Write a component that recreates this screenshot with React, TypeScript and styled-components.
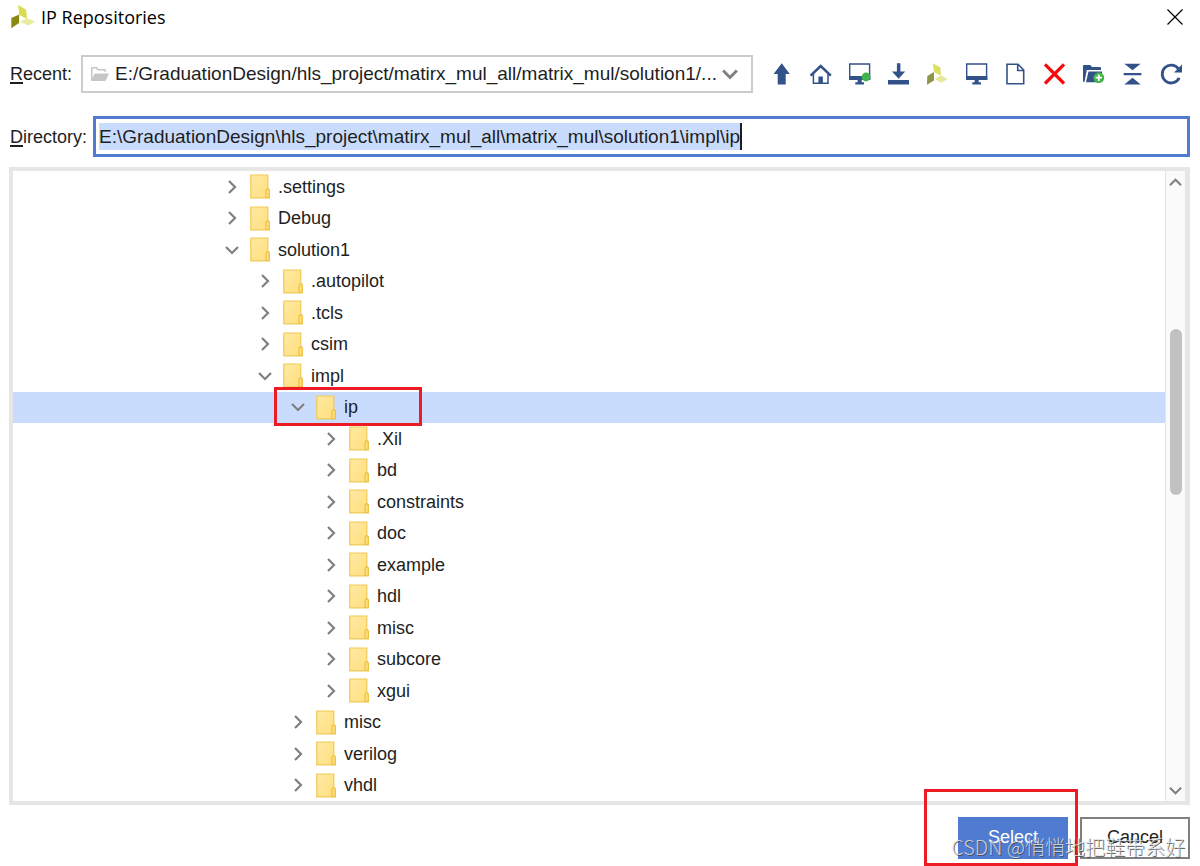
import React, { useState } from "react";
import styled, { createGlobalStyle } from "styled-components";

const color = {
  ink: "#1e1e1e",
  navy: "#34528a",
  accent: "#4f7cd1",
  highlight: "#cadcfd",
  line: "#e6e6e6",
  mark: "#ed1c24",
};

const GlobalStyle = createGlobalStyle`
  * { box-sizing: border-box; }
  body { margin: 0; background: #fff; }
  button, input, select { font: inherit; color: inherit; margin: 0; }
`;

const Dialog = styled.main`
  display: flex;
  flex-direction: column;
  min-height: 100vh;
  padding: 0 10px 7px;
  overflow: hidden;
  font-family: "Liberation Sans", Arial, sans-serif;
  font-size: 18px;
  line-height: 24px;
  color: ${color.ink};
`;

const TitleBar = styled.header`
  display: flex;
  align-items: center;
  gap: 5px;
  height: 34px;
`;

const Title = styled.h1`
  flex: 1;
  margin: 0;
  font: 400 18px/24px "Open Sans", "Noto Sans", sans-serif;
  color: #000;
`;

const PlainButton = styled.button`
  display: flex;
  align-items: center;
  justify-content: center;
  padding: 0;
  border: 0;
  background: none;
  cursor: pointer;
`;

const CloseButton = styled(PlainButton)`
  width: 30px;
  height: 30px;
`;

const RecentRow = styled.div`
  display: flex;
  align-items: center;
  margin-top: 21px;
`;

const FieldLabel = styled.label<{ $width: number }>`
  flex: none;
  width: ${(p) => p.$width}px;
  u { text-underline-offset: 2px; text-decoration-thickness: 2px; }
`;

const Combo = styled.div`
  display: grid;
  grid-template-columns: 33px 1fr 42px;
  align-items: center;
  flex: 1;
  min-width: 0;
  height: 38px;
  border: 2px solid #cccccc;
  & > svg { grid-row: 1; justify-self: center; pointer-events: none; }
  & > svg:first-of-type { grid-column: 1; }
  & > svg:last-of-type { grid-column: 3; }
`;

const RecentSelect = styled.select`
  grid-row: 1;
  grid-column: 1 / -1;
  width: 100%;
  height: 34px;
  padding: 0 28px 0 32px;
  border: 0;
  outline: 0;
  appearance: none;
  background: none;
  font-size: 19px;
  text-overflow: ellipsis;
`;

const Toolbar = styled.div`
  display: flex;
  margin: 0 -1px 0 9px;
`;

const ToolButton = styled(PlainButton)`
  width: 39px;
  height: 38px;
`;

const DirectoryRow = styled.div`
  display: flex;
  align-items: center;
  margin-top: 23px;
`;

const DirectoryBox = styled.div`
  display: flex;
  align-items: center;
  flex: 1;
  min-width: 0;
  height: 41px;
  padding: 0 3px;
  border: 3px solid ${color.accent};
`;

const DirectoryInput = styled.input`
  field-sizing: content;
  max-width: 100%;
  height: 27px;
  padding: 0;
  border: 0;
  border-right: 2px solid ${color.ink};
  outline: 0;
  background: ${color.highlight};
  font-size: 19px;
`;

const Panel = styled.section`
  display: flex;
  flex: 1;
  margin: 10px 0 0 -1px;
  border: 4px solid ${color.line};
  border-right-width: 5px;
`;

const Tree = styled.ul`
  display: flex;
  flex-direction: column;
  flex: 1;
  margin: 0;
  padding: 0;
  list-style: none;
`;

const TreeRow = styled.li<{ $depth: number; $selected: boolean }>`
  position: relative;
  display: flex;
  flex: 1;
  align-items: center;
  min-height: 28px;
  padding-left: ${(p) => 212 + p.$depth * 33}px;
  background: ${(p) => (p.$selected ? color.highlight : "transparent")};
`;

const Toggle = styled(PlainButton)`
  width: 14px;
  height: 24px;
  margin-right: 11px;
`;

const FolderName = styled.span`
  margin-left: 8px;
`;

const Mark = styled.span`
  position: absolute;
  border: 3px solid ${color.mark};
  pointer-events: none;
`;

const RowMark = styled(Mark)`
  inset: -5px auto -3px 261px;
  width: 148px;
`;

const ButtonMark = styled(Mark)`
  inset: -28px -10px -7px -34px;
`;

const ScrollBar = styled.div`
  display: flex;
  flex-direction: column;
  align-items: center;
  width: 20px;
  border-left: 1px solid ${color.line};
  background: #fafafa;
`;

const ScrollArrow = styled(PlainButton)`
  width: 19px;
  height: 22px;
`;

const TrackSpace = styled.div<{ $share: number }>`
  flex: ${(p) => p.$share};
`;

const Thumb = styled.div`
  flex: 166;
  width: 12px;
  border-radius: 6px;
  background: #c1c1c1;
`;

const Footer = styled.footer`
  position: relative;
  display: flex;
  justify-content: flex-end;
  gap: 12px;
  margin-top: 12px;
`;

const ButtonSlot = styled.div`
  position: relative;
`;

const ActionButton = styled.button<{ $primary?: boolean }>`
  display: block;
  width: 110px;
  height: 42px;
  padding: 0 0 2px;
  border: 2px solid ${(p) => (p.$primary ? color.accent : "#808080")};
  background: ${(p) => (p.$primary ? color.accent : "#fff")};
  color: ${(p) => (p.$primary ? "#fff" : color.ink)};
`;

const Watermark = styled.span`
  position: absolute;
  right: 5px;
  bottom: 0;
  font: 20px/24px "Noto Sans CJK SC", sans-serif;
  font-weight: 300;
  white-space: nowrap;
  color: rgba(225, 225, 225, 0.85);
  text-shadow: 1px 1px 0 rgba(70, 70, 70, 0.8);
  pointer-events: none;
`;

function Chevron({ dir, size = 14, weight = 2.2 }: { dir: "right" | "down" | "up"; size?: number; weight?: number }) {
  const d = { right: "M4 1L10 7L4 13", down: "M1 4L7 10L13 4", up: "M1 10L7 4L13 10" }[dir];
  return (
    <svg width={size} height={size} viewBox="0 0 14 14" fill="none" stroke="#808080" strokeWidth={weight} aria-hidden>
      <path d={d} />
    </svg>
  );
}

const FolderIcon = () => (
  <svg width="20" height="25" viewBox="0 0 20 25" aria-hidden>
    <defs>
      <linearGradient id="folder" x1="0" y1="0" x2="1" y2="1">
        <stop offset="0" stopColor="#ffe9a2" />
        <stop offset="1" stopColor="#ffdf7e" />
      </linearGradient>
    </defs>
    <path d="M.8 1H17.8V14.5L19.3 16V23.8H.8Z" fill="url(#folder)" stroke="#f0c955" strokeWidth="1.2" />
    <path d="M16 23.5V16.5Q16 14.8 17.6 14.8Q19.3 14.8 19.3 16.5V23.5Z" fill="#ffdf80" stroke="#ecc044" strokeWidth="1.2" />
  </svg>
);

const OpenFolderIcon = () => (
  <svg width="18" height="15" viewBox="0 0 18 15" fill="#c6c6c6" aria-hidden>
    <path d="M0 13V1.2Q0 0 1.2 0H5.8L7.5 2H13.5Q15 2 15 3.4V5H13.5V3.5H6.7L5 1.6H1.5V11L3.8 6.5H18L15 13.2Q14.6 14 13.6 14H1Q0 14 0 13Z" />
  </svg>
);

const AppLogo = () => (
  <svg width="26" height="26" viewBox="0 0 26 26" aria-hidden>
    <path d="M8 1L16 5.5L17 15L9.5 11Z" fill="#d8dc50" />
    <path d="M1.3 14L9.2 10.5L9 19L1.3 24.3Z" fill="#8a8a10" />
    <path d="M10 17.8L17 14.3L25.3 17.8L18 21.6Z" fill="#e8eb9c" />
  </svg>
);

const monitor = (
  <>
    <path d="M1.7 2H21.6V17.3H1.7Z" fill="none" stroke={color.navy} strokeWidth="1.4" />
    <path d="M1 14H22.3V18H13.7V20.3H16V22.6H7.3V20.3H9.6V18H1Z" />
  </>
);

const tools: { label: string; art: React.ReactNode }[] = [
  { label: "Up", art: <path d="M11.7 1.3L19.8 12H15.7V22.6H7.7V12H3.6Z" /> },
  {
    label: "Home",
    art: (
      <>
        <path d="M4.4 11V21.2H19V11" fill="none" stroke={color.navy} strokeWidth="1.5" />
        <path d="M1.6 13.6L11.7 4.1L21.8 13.6" fill="none" stroke={color.navy} strokeWidth="2.6" />
        <path d="M9.4 21.5V14.5H13.9V21.5Z" />
      </>
    ),
  },
  { label: "Desktop", art: <>{monitor}<circle cx="18" cy="15" r="4.4" fill="#41b34b" /></> },
  { label: "Downloads", art: <path d="M9.9 1.3H13.4V9.6H18.2L11.6 16.7L5 9.6H9.9ZM1 18H22V22.6H1Z" /> },
  {
    label: "Installation",
    art: (
      <>
        <path d="M6.7 1.3L14.3 5.3L15 13.7L8 10Z" fill="#dbe062" />
        <path d="M1.3 14L8 10V18.5L1 22.7Z" fill="#8e9448" />
        <path d="M8.5 17L15 13.6L21.8 17L15 20.7Z" fill="#e6e99c" />
      </>
    ),
  },
  { label: "Working directory", art: monitor },
  {
    label: "New file",
    art: (
      <path d="M3 2.3H14L19.7 8V21.7H3ZM13.7 2.3V8.5H19.7" fill="none" stroke={color.navy} strokeWidth="1.6" />
    ),
  },
  { label: "Delete", art: <path d="M2 2.3L21 21.5M21 2.3L2 21.5" fill="none" stroke="#f40b0b" strokeWidth="3.2" /> },
  {
    label: "New folder",
    art: (
      <>
        <path d="M1 20V4Q1 3 2 3H8.2L10 5H18Q19 5 19 6V8H4.8L2.6 19.5Z" />
        <path d="M6.5 9.5H20.3L18.3 20.3H4Z" />
        <circle cx="16.8" cy="15.7" r="5.4" fill="#41b34b" />
        <path d="M16.8 12.5V18.9M13.6 15.7H20" stroke="#fff" strokeWidth="1.8" />
      </>
    ),
  },
  { label: "Collapse all", art: <path d="M3.3 1.7H19.7L11.5 8.3ZM2.7 10.9H20.4V13.3H2.7ZM11.5 15.7L19.7 22.4H3.3Z" /> },
  {
    label: "Refresh",
    art: (
      <>
        <path d="M18.6 7.2A8.9 8.9 0 1 0 19.2 15.8" fill="none" stroke={color.navy} strokeWidth="2.8" />
        <path d="M22 2.5V10.4H14Z" />
      </>
    ),
  },
];

const folders: { name: string; depth: number; open?: boolean }[] = [
  { name: ".settings", depth: 0 },
  { name: "Debug", depth: 0 },
  { name: "solution1", depth: 0, open: true },
  { name: ".autopilot", depth: 1 },
  { name: ".tcls", depth: 1 },
  { name: "csim", depth: 1 },
  { name: "impl", depth: 1, open: true },
  { name: "ip", depth: 2, open: true },
  { name: ".Xil", depth: 3 },
  { name: "bd", depth: 3 },
  { name: "constraints", depth: 3 },
  { name: "doc", depth: 3 },
  { name: "example", depth: 3 },
  { name: "hdl", depth: 3 },
  { name: "misc", depth: 3 },
  { name: "subcore", depth: 3 },
  { name: "xgui", depth: 3 },
  { name: "misc", depth: 2 },
  { name: "verilog", depth: 2 },
  { name: "vhdl", depth: 2 },
];

export default function App() {
  const [selected, setSelected] = useState(7);
  const [directory, setDirectory] = useState(
    "E:\\GraduationDesign\\hls_project\\matirx_mul_all\\matrix_mul\\solution1\\impl\\ip"
  );

  return (
    <Dialog>
      <GlobalStyle />
      <TitleBar>
        <AppLogo />
        <Title>IP Repositories</Title>
        <CloseButton aria-label="Close">
          <svg width="16" height="16" viewBox="0 0 16 16" stroke="#000" strokeWidth="1.2" aria-hidden>
            <path d="M.5 .5L15.5 15.5M15.5 .5L.5 15.5" />
          </svg>
        </CloseButton>
      </TitleBar>

      <RecentRow>
        <FieldLabel htmlFor="recent" $width={71}><u>R</u>ecent:</FieldLabel>
        <Combo>
          <OpenFolderIcon />
          <RecentSelect id="recent">
            <option>E:/GraduationDesign/hls_project/matirx_mul_all/matrix_mul/solution1/...</option>
          </RecentSelect>
          <Chevron dir="down" size={16} weight={2.6} />
        </Combo>
        <Toolbar role="toolbar">
          {tools.map((tool) => (
            <ToolButton key={tool.label} aria-label={tool.label}>
              <svg width="23" height="24" viewBox="0 0 23 24" fill={color.navy} aria-hidden>{tool.art}</svg>
            </ToolButton>
          ))}
        </Toolbar>
      </RecentRow>

      <DirectoryRow>
        <FieldLabel htmlFor="directory" $width={83}><u>D</u>irectory:</FieldLabel>
        <DirectoryBox>
          <DirectoryInput id="directory" value={directory} onChange={(e) => setDirectory(e.target.value)} />
        </DirectoryBox>
      </DirectoryRow>

      <Panel>
        <Tree role="tree">
          {folders.map((folder, i) => (
            <TreeRow
              key={i}
              role="treeitem"
              aria-level={folder.depth + 1}
              aria-selected={i === selected}
              $depth={folder.depth}
              $selected={i === selected}
              onClick={() => setSelected(i)}
            >
              <Toggle aria-label={`Toggle ${folder.name}`} aria-expanded={!!folder.open}>
                <Chevron dir={folder.open ? "down" : "right"} />
              </Toggle>
              <FolderIcon />
              <FolderName>{folder.name}</FolderName>
              {i === selected && <RowMark />}
            </TreeRow>
          ))}
        </Tree>
        <ScrollBar>
          <ScrollArrow aria-label="Scroll up"><Chevron dir="up" size={13} /></ScrollArrow>
          <TrackSpace $share={136} />
          <Thumb />
          <TrackSpace $share={284} />
          <ScrollArrow aria-label="Scroll down"><Chevron dir="down" size={13} /></ScrollArrow>
        </ScrollBar>
      </Panel>

      <Footer>
        <ButtonSlot>
          <ActionButton $primary>Select</ActionButton>
          <ButtonMark />
        </ButtonSlot>
        <ActionButton>Cancel</ActionButton>
        <Watermark>CSDN @悄悄地把鞋带系好</Watermark>
      </Footer>
    </Dialog>
  );
}
